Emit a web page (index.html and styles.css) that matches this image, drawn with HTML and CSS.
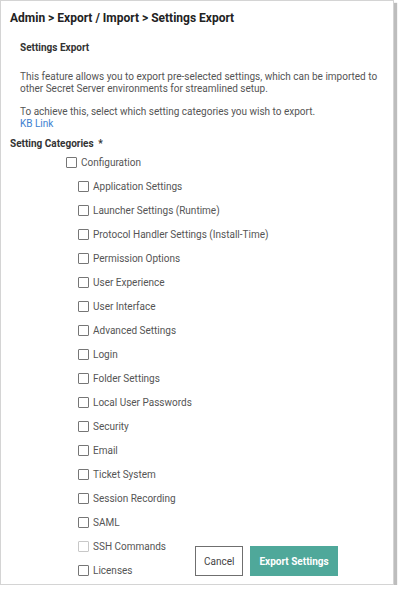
FILE: index.html
```html
<!DOCTYPE html>
<html>
<head>
    <title>Settings Export</title>
    <meta charset="UTF-8">
    <link rel="stylesheet" href="styles.css">
</head>
<body>

    <div class="frame">
        <h1 class="crumbs">Admin &gt; Export / Import &gt; Settings Export</h1>

        <div class="intro">
            <h2>Settings Export</h2>
            <p>This feature allows you to export pre-selected settings, which can be imported to other Secret Server environments for streamlined setup.</p>
            <p class="hint">To achieve this, select which setting categories you wish to export.<br><a href="#">KB Link</a></p>
        </div>

        <div class="label">Setting Categories <span class="req">*</span></div>

        <div class="form-body">
            <div class="tree">
                <label class="row top"><span class="box"></span>Configuration</label>
                <label class="row"><span class="box"></span>Application Settings</label>
                <label class="row"><span class="box"></span>Launcher Settings (Runtime)</label>
                <label class="row"><span class="box"></span>Protocol Handler Settings (Install-Time)</label>
                <label class="row"><span class="box"></span>Permission Options</label>
                <label class="row"><span class="box"></span>User Experience</label>
                <label class="row"><span class="box"></span>User Interface</label>
                <label class="row"><span class="box"></span>Advanced Settings</label>
                <label class="row"><span class="box"></span>Login</label>
                <label class="row"><span class="box"></span>Folder Settings</label>
                <label class="row"><span class="box"></span>Local User Passwords</label>
                <label class="row"><span class="box"></span>Security</label>
                <label class="row"><span class="box"></span>Email</label>
                <label class="row"><span class="box"></span>Ticket System</label>
                <label class="row"><span class="box"></span>Session Recording</label>
                <label class="row"><span class="box"></span>SAML</label>
                <label class="row"><span class="box disabled"></span>SSH Commands</label>
                <label class="row"><span class="box"></span>Licenses</label>
            </div>

            <div class="actions">
                <button class="btn">Cancel</button>
                <button class="btn primary">Export Settings</button>
            </div>
        </div>
    </div>

</body>
</html>
```

FILE: styles.css
```css
body {
    margin: 0;
    font-family: Roboto, "Liberation Sans", Arial, sans-serif;
    background: white;
}
.frame {
    width: 394px;
    height: 585px;
    border: 1px solid #d4d4d4;
    box-shadow: 3px 3px 1px #bdbdbd;
    background: white;
    overflow: hidden;
    box-sizing: border-box;
}
.crumbs {
    margin: 0;
    padding: 9px 0 0 9px;
    font-size: 12px;
    font-weight: bold;
    color: #222;
    line-height: 16px;
}
.intro {
    padding: 0 0 0 19px;
}
.intro h2 {
    margin: 15px 0 0;
    font-size: 10px;
    font-weight: bold;
    color: #333;
    line-height: 14px;
}
.intro p {
    margin: 16px 0 0;
    font-size: 10px;
    line-height: 12px;
    color: #555;
}
.intro p.hint {
    margin-top: 11px;
}
.intro a {
    color: #3d7fd1;
    text-decoration: none;
}
.label {
    margin: 7px 0 0 9px;
    font-size: 10px;
    font-weight: bold;
    color: #333;
    line-height: 14px;
}
.req {
    margin-left: 2px;
}
.form-body {
    display: grid;
    margin-top: -1px;
}
.tree,
.actions {
    grid-area: 1 / 1;
}
.tree {
    display: flex;
    flex-direction: column;
    padding-left: 77px;
}
.row {
    display: flex;
    align-items: center;
    height: 24px;
    font-size: 10px;
    color: #555;
    white-space: nowrap;
}
.row .box {
    width: 9px;
    height: 9px;
    border: 1px solid #767676;
    border-radius: 1px;
    margin-right: 4px;
}
.row.top {
    margin-left: -12px;
}
.box.disabled {
    border-color: #c8c8c8;
}
.actions {
    display: flex;
    gap: 7px;
    align-self: end;
    margin: 0 0 6px 194px;
}
.btn {
    height: 30px;
    font-family: inherit;
    font-size: 10px;
    padding: 0 8px;
    border: 1px solid #6f6f6f;
    background: white;
    color: #444;
    cursor: pointer;
}
.btn.primary {
    background: #4fa89a;
    border-color: #4fa89a;
    color: white;
    font-weight: bold;
}
```
